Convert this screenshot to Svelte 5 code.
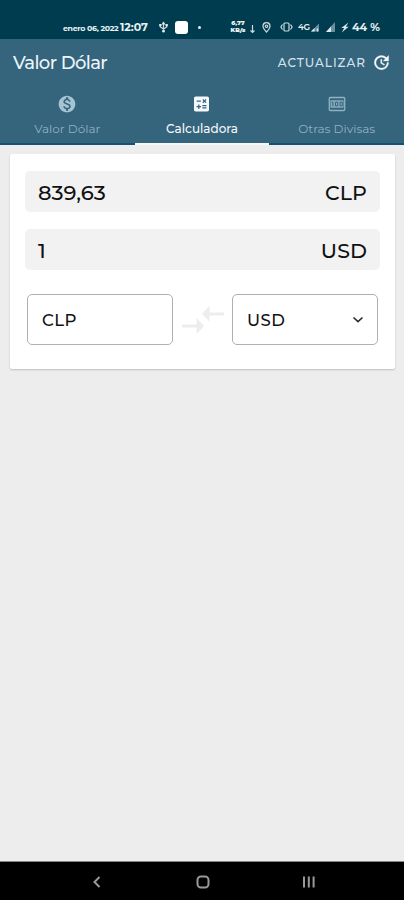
<script lang="ts">
	let amount = $state('839,63');
	let result = $state('1');
	let from = $state('CLP');
	let to = $state('USD');
	let active = $state('calc');

	const tabs = [
		{ id: 'value', name: 'Valor Dólar' },
		{ id: 'calc', name: 'Calculadora' },
		{ id: 'other', name: 'Otras Divisas' }
	];
</script>

<div class="screen">
	<div class="status">
		<span class="date">enero 06, 2022</span>
		<span class="time">12:07</span>
		<svg class="usb" width="9" height="12" viewBox="0 0 9 12">
			<path d="M4.5 1v10M1.3 4v2l3.2 2 3.2-2V4" />
			<path class="solid" d="M2.500 3.400 4.500.500l2 2.900zM.2 3h2.300v2.300H.2zM6.500 3h2.300v2.300H6.500z" />
			<circle class="solid" cx="4.5" cy="10.2" r="1.4" />
		</svg>
		<span class="app"></span>
		<span class="dot"></span>
		<span class="speed"><b>6,77</b><b>KB/s</b></span>
		<svg class="down" width="5" height="9" viewBox="0 0 5 9"><path d="M2.5 0v7M.5 5.5l2 2 2-2" /></svg>
		<svg class="pin" width="9" height="11" viewBox="0 0 9 11">
			<path d="M4.5 10C2.5 7.8 1 6 1 4.2a3.5 3.5 0 0 1 7 0C8 6 6.5 7.8 4.5 10z" />
			<circle cx="4.5" cy="4.2" r="1.2" />
		</svg>
		<svg class="vibrate" width="13" height="10" viewBox="0 0 13 10">
			<rect x="4" y="1" width="5" height="8" rx="1" />
			<path d="M2.500 2.500.9 5l1.600 2.500M10.500 2.500 12.100 5l-1.600 2.500" />
		</svg>
		<span class="net">4G</span>
		<svg class="signal" width="8" height="9" viewBox="0 0 9 9">
			<path class="faint" d="M0 9 9 0v9z" /><path class="solid" d="M0 9l4-4v4zM6.5 5.500H8V9H6.500z" />
		</svg>
		<svg class="signal second" width="9" height="10" viewBox="0 0 9 10">
			<path class="faint" d="M0 10 9 0v10z" /><path class="solid" d="M0 10l5-5.500V10z" />
		</svg>
		<svg class="bolt" width="8" height="11" viewBox="0 0 8 11"><path class="solid" d="M7.500.5.300 6h2.900L.700 10.500 7.700 4.800H4.800z" /></svg>
		<span class="battery">44 %</span>
	</div>

	<header>
		<div class="toolbar">
			<h1>Valor Dólar</h1>
			<button class="refresh">
				<span>ACTUALIZAR</span>
				<svg width="19" height="19" viewBox="0 0 24 24">
					<path d="M21 10.120h-6.780l2.740-2.820c-2.730-2.700-7.150-2.800-9.880-.1-2.730 2.710-2.730 7.080 0 9.790s7.150 2.710 9.880 0C18.320 15.650 19 14.080 19 12.100h2c0 1.980-.88 4.550-2.640 6.290-3.510 3.480-9.210 3.480-12.720 0-3.500-3.470-3.530-9.110-.02-12.580s9.140-3.470 12.650 0L21 3zM12.500 8v4.250l3.500 2.080-.72 1.210L11 13V8z" />
				</svg>
			</button>
		</div>
		<nav>
			{#each tabs as tab}
				<button class="tab {tab.id}" class:active={active === tab.id} onclick={() => (active = tab.id)}>
					{#if tab.id === 'value'}
						<svg width="20" height="20" viewBox="0 0 24 24">
							<path d="M12 2C6.480 2 2 6.480 2 12s4.480 10 10 10 10-4.480 10-10S17.520 2 12 2zm1.410 16.090V20h-2.670v-1.930c-1.710-.36-3.160-1.460-3.270-3.400h1.960c.1 1.050.82 1.870 2.650 1.870 1.960 0 2.400-.98 2.400-1.590 0-.83-.44-1.610-2.670-2.140-2.480-.6-4.180-1.620-4.180-3.670 0-1.720 1.390-2.840 3.110-3.210V4h2.670v1.950c1.860.45 2.790 1.860 2.850 3.390H14.300c-.05-1.110-.64-1.870-2.220-1.870-1.500 0-2.400.68-2.400 1.640 0 .84.65 1.390 2.670 1.910s4.180 1.390 4.180 3.910c-.01 1.830-1.380 2.830-3.120 3.160z" />
						</svg>
					{:else if tab.id === 'calc'}
						<svg width="21" height="20" viewBox="0 0 24 24">
							<path d="M19 3H5c-1.100 0-2 .9-2 2v14c0 1.100.9 2 2 2h14c1.100 0 2-.9 2-2V5c0-1.100-.9-2-2-2zm-5.970 4.060L14.090 6l1.410 1.410L16.910 6l1.060 1.060-1.410 1.410 1.410 1.410-1.060 1.060-1.410-1.400-1.410 1.410-1.060-1.060 1.410-1.410zM6.250 7.720h5v1.500h-5zM11.500 16h-2v2H8v-2H6v-1.500h2v-2h1.500v2h2zm6.500 1.250h-5v-1.500h5zm0-2.500h-5v-1.500h5z" />
						</svg>
					{:else}
						<svg width="20" height="20" viewBox="0 0 20 20">
							<rect class="note" x="2.3" y="3.500" width="15.4" height="13" rx="1" />
							<path class="note-fill" d="M3.500 6.200h13v7.600h-13z" />
							<path class="digits" d="M4.700 8.200h1.200v4M8.500 8.200h2.300v3.600H8.500zM13 8.200h2.300v3.600H13z" />
						</svg>
					{/if}
					<span>{tab.name}</span>
				</button>
			{/each}
		</nav>
	</header>

	<main>
		<section class="card">
			<div class="field"><span>{amount}</span><span class="code">CLP</span></div>
			<div class="field"><span>{result}</span><span class="code">USD</span></div>
			<div class="pair">
				<button class="select">{from}</button>
				<svg class="swap" width="42" height="28" viewBox="0 0 42 28">
					<path d="M0 18.500h14.500V12l7.500 8-7.500 8v-6.500H0zM42 6.500H27.500V0L20 8l7.500 7.500v-6H42z" />
				</svg>
				<button class="select">
					{to}
					<svg width="12" height="8" viewBox="0 0 12 8"><path d="M1.500 1.500 6 5.700l4.500-4.200" /></svg>
				</button>
			</div>
		</section>
	</main>

	<footer>
		<svg width="8" height="12" viewBox="0 0 8 12"><path d="M6.500 1 1.500 6l5 5" /></svg>
		<svg width="14" height="14" viewBox="0 0 14 14"><rect x="1.500" y="1.500" width="11" height="11" rx="3.500" /></svg>
		<svg width="14" height="12" viewBox="0 0 14 12"><path d="M2 .5v11M6.800.5v11M11.600.5v11" /></svg>
	</footer>
</div>

<style>
	:global(body) {
		margin: 0;
	}

	.screen {
		display: flex;
		flex-direction: column;
		box-sizing: border-box;
		height: 900px;
		overflow: hidden;
		background: #ededed;
		font-family: Montserrat, Inter, sans-serif;
	}

	.screen * {
		box-sizing: border-box;
	}

	svg {
		display: block;
		flex-shrink: 0;
	}

	button {
		padding: 0;
		border: none;
		background: none;
		color: inherit;
		font-family: inherit;
	}

	.status {
		display: flex;
		align-items: center;
		height: 39px;
		padding: 15px 0 0 63px;
		background: #003c50;
		color: #e9f1f3;
		font-weight: 700;
		white-space: nowrap;
	}

	.status > * {
		flex-shrink: 0;
	}

	.status svg {
		fill: none;
		stroke: #cbd9de;
		stroke-width: 1.2;
	}

	.status .solid {
		fill: #dfe9ec;
		stroke: none;
	}

	.status .faint {
		fill: #6b8f9c;
		stroke: none;
	}

	.date {
		width: 57px;
		padding-top: 1px;
		font-size: 7.8px;
		letter-spacing: -0.3px;
	}

	.time {
		width: 39px;
		font-size: 11px;
	}

	.app {
		width: 13px;
		height: 13px;
		margin-left: 7px;
		border-radius: 3px;
		background: #fff;
	}

	.dot {
		width: 3px;
		height: 3px;
		margin: 0 28px 0 10px;
		border-radius: 50%;
		background: #e9f1f3;
	}

	.speed {
		display: flex;
		flex-direction: column;
		width: 18px;
		font-size: 6px;
		line-height: 7.5px;
		text-align: center;
	}

	.down {
		margin: 4px 0 0 3px;
	}

	.pin {
		margin-left: 7px;
	}

	.vibrate {
		margin-left: 9px;
	}

	.net {
		width: 13px;
		margin-left: 5px;
		font-size: 8.5px;
		font-weight: 600;
		letter-spacing: -0.3px;
	}

	.signal.second {
		margin-left: 7px;
	}

	.bolt {
		margin-left: 6px;
	}

	.battery {
		margin-left: 3px;
		font-size: 11px;
	}

	header {
		height: 106px;
		background: #35647d;
		color: #edf5f9;
	}

	.toolbar {
		display: flex;
		align-items: center;
		justify-content: space-between;
		height: 47px;
		padding: 0 13px 0 13px;
	}

	h1 {
		margin: 0;
		font-size: 18px;
		font-weight: 500;
		letter-spacing: -0.6px;
	}

	.refresh {
		display: flex;
		align-items: center;
		gap: 6px;
		font-size: 12px;
		font-weight: 500;
		letter-spacing: 1px;
		color: #d5e3ea;
	}

	.refresh svg {
		fill: #f4f9fb;
		stroke: #f4f9fb;
		stroke-width: 0.4;
	}

	nav {
		display: grid;
		grid-template-columns: repeat(3, 1fr);
		height: 59px;
	}

	.tab {
		display: flex;
		flex-direction: column;
		align-items: center;
		gap: 7px;
		padding-top: 8px;
		border-bottom: 2px solid #135371;
		color: #8fb0c1;
		font-size: 12px;
		line-height: 16px;
	}

	.tab svg {
		fill: #a6c3d2;
	}

	.tab.active {
		border-bottom-color: #f5f8fa;
		color: #f5f9fb;
		font-weight: 500;
	}

	.tab.active svg {
		fill: #f5f9fb;
	}

	.tab .note {
		fill: none;
		stroke: #8fb3c1;
		stroke-width: 1.3;
	}

	.tab .note-fill {
		fill: #83aaba;
	}

	.tab .digits {
		fill: none;
		stroke: #315f75;
		stroke-width: 0.9;
	}

	main {
		flex: 1;
		padding: 9px 9px 0 10px;
	}

	.card {
		height: 215px;
		padding: 17px 15px 0;
		border-radius: 2px;
		background: #fff;
		box-shadow: 0 1px 2px #0003;
	}

	.field {
		display: flex;
		align-items: center;
		justify-content: space-between;
		height: 41px;
		margin-bottom: 17px;
		padding: 2px 13px 0;
		border-radius: 5px;
		background: #f2f2f2;
		color: #111;
		font-size: 21px;
		font-weight: 500;
	}

	.code {
		font-size: 20.5px;
		letter-spacing: 0.1px;
	}

	.pair {
		display: flex;
		align-items: center;
		justify-content: space-between;
		margin-top: 24px;
		padding: 0 2px;
	}

	.select {
		display: flex;
		align-items: center;
		justify-content: space-between;
		width: 146px;
		height: 51px;
		padding: 1px 13px 0 14px;
		border: 1.5px solid #b0b0b0;
		border-radius: 5px;
		color: #111;
		font-size: 16.5px;
		font-weight: 500;
		letter-spacing: 0.5px;
	}

	.select svg {
		fill: none;
		stroke: #2c2c2c;
		stroke-width: 1.6;
	}

	.swap {
		fill: #ededed;
	}

	footer {
		display: flex;
		align-items: center;
		justify-content: space-between;
		height: 39px;
		padding: 1px 88px 0 93px;
		border-top: 1px solid #858585;
		background: #000;
	}

	footer svg {
		fill: none;
		stroke: #999;
		stroke-width: 2;
	}

	footer svg:nth-child(2) {
		margin-left: 3px;
	}
</style>
